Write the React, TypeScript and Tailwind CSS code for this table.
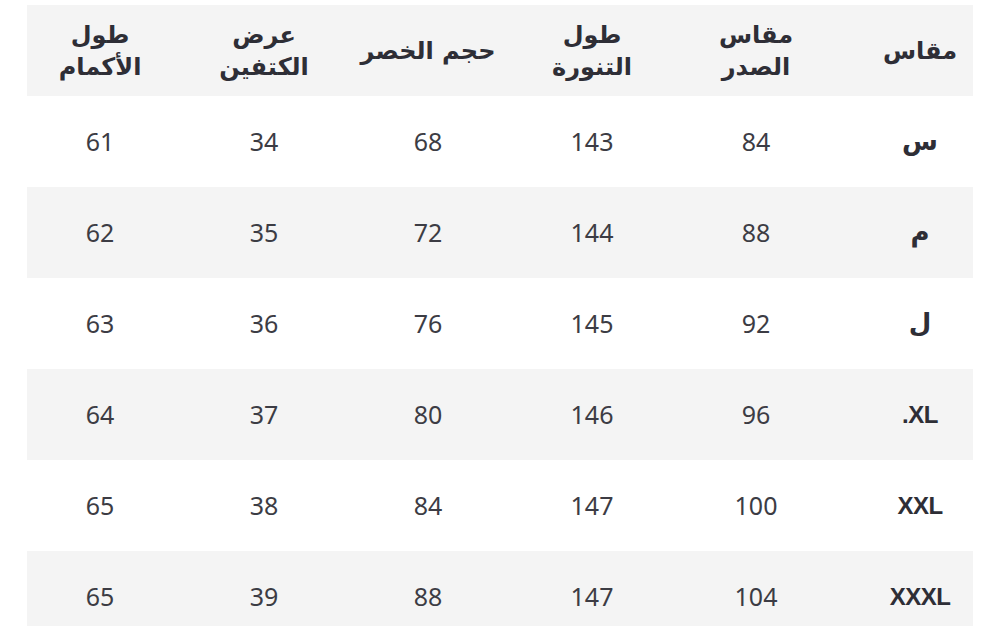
import React from "react";

const header = [
  ["طول", "الأكمام"],
  ["عرض", "الكتفين"],
  ["حجم الخصر"],
  ["طول", "التنورة"],
  ["مقاس", "الصدر"],
  ["مقاس"],
];

const rows: [string, string, string, string, string, string][] = [
  ["61", "34", "68", "143", "84", "س"],
  ["62", "35", "72", "144", "88", "م"],
  ["63", "36", "76", "145", "92", "ل"],
  ["64", "37", "80", "146", "96", "XL."],
  ["65", "38", "84", "147", "100", "XXL"],
  ["65", "39", "88", "147", "104", "XXXL"],
];

const arabic = { fontFamily: '"DejaVu Sans", "Noto Sans", sans-serif' };
const latin = { fontFamily: '"Liberation Sans", Arial, sans-serif' };
const num = { fontFamily: '"Noto Sans", "Open Sans", sans-serif' };

export default function App() {
  return (
    <div className="w-[1000px] h-[626px] overflow-hidden bg-white pt-[5px] pl-[27px]">
      <div className="w-[946px]">
        <div className="h-[91px] bg-[#f4f4f4]">
          <div className="grid grid-cols-6 w-[984px] -ml-[9px] h-full">
            {header.map((lines, i) => (
              <div
                key={i}
                dir="rtl"
                className="flex flex-col items-center justify-center text-[24px] font-bold leading-[32px] text-[#2e2e36]"
                style={arabic}
              >
                {lines.map((l, j) => (
                  <span key={j}>{l}</span>
                ))}
              </div>
            ))}
          </div>
        </div>
        {rows.map((r, ri) => (
          <div key={ri} className={`h-[91px] ${ri % 2 === 1 ? "bg-[#f4f4f4]" : "bg-white"}`}>
            <div className="grid grid-cols-6 w-[984px] -ml-[9px] h-full">
              {r.map((c, ci) =>
                ci < 5 ? (
                  <div
                    key={ci}
                    className="flex items-center justify-center text-[25px] text-[#3c3c44]"
                    style={num}
                  >
                    {c}
                  </div>
                ) : /[A-Z]/.test(c) ? (
                  <div
                    key={ci}
                    dir="rtl"
                    className="flex items-center justify-center text-[24px] font-bold tracking-[-0.5px] text-[#2e2e36]"
                    style={latin}
                  >
                    {c}
                  </div>
                ) : (
                  <div
                    key={ci}
                    dir="rtl"
                    className="flex items-center justify-center text-[26px] font-bold text-[#2e2e36]"
                    style={arabic}
                  >
                    {c}
                  </div>
                )
              )}
            </div>
          </div>
        ))}
      </div>
    </div>
  );
}
